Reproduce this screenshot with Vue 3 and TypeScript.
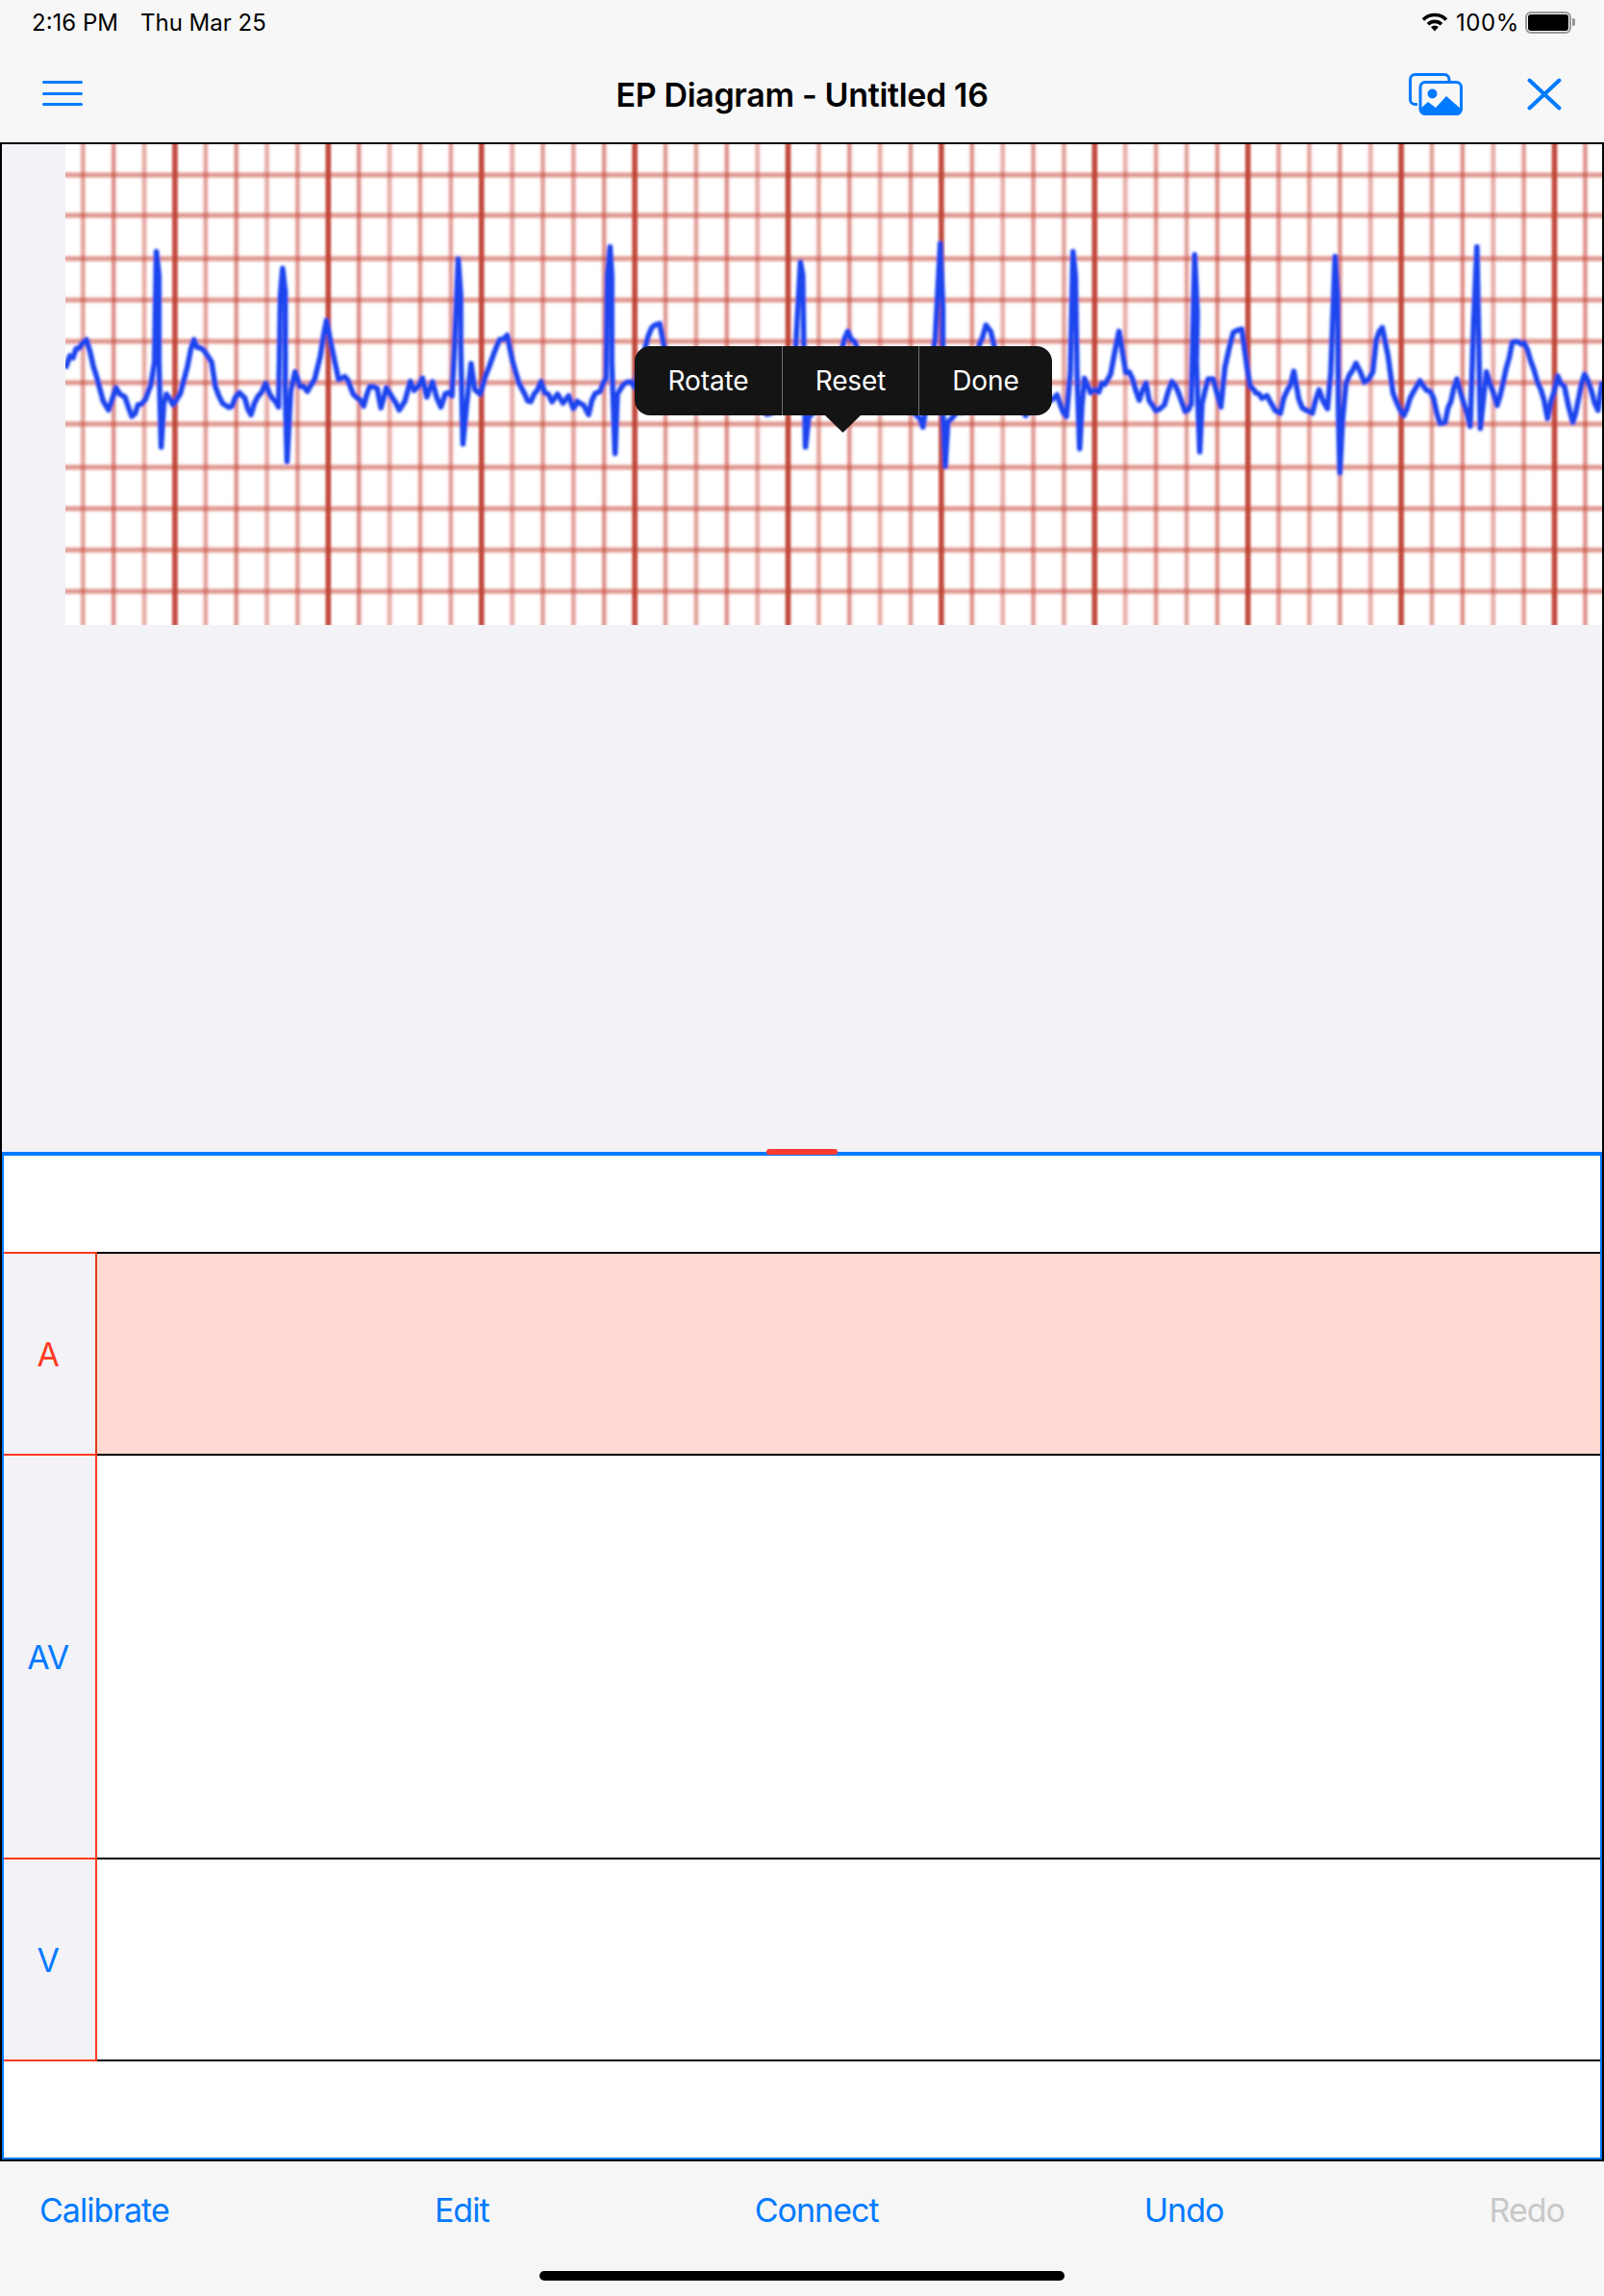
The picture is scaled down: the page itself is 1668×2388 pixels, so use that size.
<script setup lang="ts">
type Crop = { x0: number; sx: number; pts: number[] };

// vertical chart lines: every fifth one is the heavy one
const pitch = 159.4 / 5;
const vLines = Array.from({ length: 51 }, (_, i) => ({
  x: 86.3 + i * pitch,
  heavy: (i - 3) % 5 === 0,
  op: [0.42, 0.52, 0.36, 0.46][i % 4],
}));
const hLines = [182, 224, 269, 312, 355, 398, 441, 486, 529, 572, 615];

// trace points read from zoomed crops, x scaled by sx, y scaled by 3 from y=220
const crops: Crop[] = [
  {
    x0: 0,
    sx: 2.613,
    pts: [
      178, 490, 190, 460, 215, 425, 235, 400, 245, 440, 262, 520, 280, 590, 295, 610, 315, 550, 325, 575, 340, 570, 358, 640, 375, 605,
      395, 590, 410, 540, 420, 470, 425, 125, 432, 200, 432, 470, 438, 735, 445, 600, 452, 565, 470, 600, 490, 575, 510, 480, 527, 400,
      535, 430, 555, 425, 575, 470, 585, 550, 605, 605, 630, 600, 650, 560, 665, 580, 682, 635, 700, 575, 722, 540, 740, 590, 757, 610,
      762, 260, 768, 178, 775, 250, 775, 550, 780, 780, 790, 560, 802, 500, 815, 550, 835, 555, 855, 525, 870, 445, 887, 340, 900, 420,
      920, 530, 945, 520, 960, 580, 988, 605, 1005, 548, 1025, 552, 1035, 615, 1050, 550, 1065, 585, 1085, 625, 1100, 590, 1115, 530,
      1125, 565, 1148, 520, 1160, 585, 1175, 540, 1198, 610, 1210, 570, 1228, 575, 1235, 430, 1245, 148, 1252, 260, 1252, 420, 1258, 725,
      1268, 600, 1280, 475, 1290, 560, 1305, 570, 1318, 525, 1340, 450, 1358, 400, 1378, 380, 1392, 470, 1410, 530, 1442, 600, 1470, 535,
      1500, 600, 1515, 570, 1530, 590, 1545, 575, 1558, 615, 1568, 597,
    ],
  },
  {
    x0: 600,
    sx: 2.904,
    pts: [
      0, 595, 20, 600, 35, 625, 55, 565, 70, 570, 88, 520, 92, 200, 100, 110, 105, 200, 105, 470, 115, 755, 122, 570, 150, 525, 175, 540,
      205, 420, 235, 350, 250, 350, 262, 420, 300, 560, 400, 600, 500, 580, 590, 635, 640, 560, 660, 430, 675, 158, 682, 200, 685, 430,
      690, 735, 700, 650, 740, 560, 800, 420, 818, 370, 838, 415, 900, 560, 1000, 590, 1045, 665, 1082, 400, 1097, 100, 1105, 300, 1105, 620,
      1112, 795, 1120, 650, 1180, 600, 1215, 420, 1235, 355, 1250, 375, 1262, 430, 1300, 560, 1355, 635, 1435, 590, 1450, 575, 1478, 640,
      1490, 500, 1498, 125, 1505, 200, 1510, 500, 1518, 740,
    ],
  },
  {
    x0: 1120,
    sx: 2.861,
    pts: [
      8, 735, 15, 600, 22, 520, 40, 560, 65, 560, 100, 500, 125, 380, 145, 500, 165, 520, 185, 580, 205, 535, 215, 600, 235, 620, 260, 605,
      282, 530, 300, 560, 322, 625, 340, 600, 350, 135, 358, 320, 355, 470, 365, 750, 372, 600, 390, 525, 405, 530, 428, 610, 440, 490,
      465, 370, 490, 370, 505, 480, 515, 550, 550, 575, 565, 570, 590, 625, 605, 620, 645, 505, 660, 590, 680, 620, 700, 625, 720, 560,
      745, 615, 755, 500, 768, 140, 775, 260, 778, 640, 782, 815, 790, 650, 800, 530, 830, 475, 855, 530, 880, 500, 890, 410, 908, 355,
      925, 440, 940, 560, 972, 640, 1000, 560, 1020, 525, 1060, 575, 1080, 665, 1095, 650, 1130, 515, 1170, 670, 1180, 350, 1190, 110,
      1195, 390, 1200, 670, 1218, 500, 1250, 610, 1295, 410, 1330, 405, 1350, 470, 1380, 555, 1400, 640, 1430, 520, 1450, 540, 1475, 660,
      1510, 500, 1550, 620, 1562, 530,
    ],
  },
];

const points = crops.flatMap((c) => {
  const out: [number, number][] = [];
  for (let i = 0; i < c.pts.length; i += 2) {
    out.push([c.x0 + c.pts[i] / c.sx, 220 + c.pts[i + 1] / 3]);
  }
  return out;
});

// the scan is noisy, so shake the gentle stretches a little
const noise = (i: number) => {
  const v = Math.sin(i * 12.9898) * 43758.5453;
  return (v - Math.floor(v) - 0.5) * 6.5;
};

let n = 0;
const trace = points
  .flatMap(([x, y], i) => {
    const next = points[i + 1];
    if (!next || next[0] - x < 5) return [`${x.toFixed(1)},${y.toFixed(1)}`];
    const steps = Math.floor((next[0] - x) / 3);
    const out: string[] = [];
    for (let s = 0; s < steps; s++) {
      const t = s / steps;
      out.push(`${(x + (next[0] - x) * t).toFixed(1)},${(y + (next[1] - y) * t + noise(n++)).toFixed(1)}`);
    }
    return out;
  })
  .join(" ");

const rows = [
  { label: "A", selected: true, size: "short" },
  { label: "AV", selected: false, size: "tall" },
  { label: "V", selected: false, size: "short" },
];

const tools = [
  { label: "Calibrate", off: false },
  { label: "Edit", off: false },
  { label: "Connect", off: false },
  { label: "Undo", off: false },
  { label: "Redo", off: true },
];
</script>

<template>
  <div class="page">
    <header class="top">
      <div class="status">
        <div class="status-left">
          <span>2:16 PM</span>
          <span>Thu Mar 25</span>
        </div>
        <div class="status-right">
          <svg class="wifi" viewBox="0 0 28 20" width="28" height="20">
            <path d="M2 7.5A17 17 0 0 1 26 7.5" fill="none" stroke="#000" stroke-width="3.6" />
            <path d="M7 12.2A10 10 0 0 1 21 12.2" fill="none" stroke="#000" stroke-width="3.6" />
            <path d="M14 19.5L10 15A6 6 0 0 1 18 15Z" fill="#000" />
          </svg>
          <span class="pct">100%</span>
          <div class="battery">
            <div class="battery-fill"></div>
          </div>
          <div class="battery-tip"></div>
        </div>
      </div>
      <nav class="nav">
        <div class="nav-left">
          <div class="burger"><i></i><i></i><i></i></div>
        </div>
        <div class="title">EP Diagram - Untitled 16</div>
        <div class="nav-right">
          <svg viewBox="0 0 56 44" width="56" height="44">
            <path d="M9 32.5H6.5a5 5 0 0 1-5-5V6.5a5 5 0 0 1 5-5H37a5 5 0 0 1 5 5V9" fill="none" stroke="#007aff" stroke-width="3" />
            <rect x="12" y="9.5" width="42.5" height="33" rx="5" fill="none" stroke="#007aff" stroke-width="3" />
            <circle cx="24.5" cy="21.5" r="5" fill="#007aff" />
            <path d="M12 37L20 30L28 36L39 24L55 38V39a5 5 0 0 1-5 5H17a5 5 0 0 1-5-5Z" fill="#007aff" />
          </svg>
          <svg viewBox="0 0 36 34" width="36" height="34">
            <path d="M2.5 2.5L33.5 31.5M33.5 2.5L2.5 31.5" fill="none" stroke="#007aff" stroke-width="4" stroke-linecap="round" />
          </svg>
        </div>
      </nav>
    </header>

    <section class="strip-panel">
      <svg class="strip" viewBox="68 150 1598 500" width="1598" height="500">
        <defs>
          <filter id="soft" x="-2%" y="-2%" width="104%" height="104%">
            <feGaussianBlur stdDeviation="0.9" />
          </filter>
        </defs>
        <rect x="68" y="150" width="1598" height="500" fill="#fff" />
        <g filter="url(#soft)">
          <line v-for="y in hLines" :key="'h' + y" x1="60" x2="1680" :y1="y" :y2="y" stroke="#c8483c" stroke-width="8" opacity="0.12" />
          <line v-for="l in vLines" :key="'v' + l.x" :x1="l.x" :x2="l.x" y1="140" y2="660" stroke="#c8483c" stroke-width="7" opacity="0.12" />
          <line v-for="y in hLines" :key="y" x1="60" x2="1680" :y1="y" :y2="y" stroke="#c4473a" stroke-width="4.5" opacity="0.48" />
          <line
            v-for="l in vLines"
            :key="l.x"
            :x1="l.x"
            :x2="l.x"
            y1="140"
            y2="660"
            :stroke="l.heavy ? '#c04436' : '#c8483c'"
            :stroke-width="l.heavy ? 5.5 : 4"
            :opacity="l.heavy ? 0.95 : l.op"
          />
          <polyline :points="trace" fill="none" stroke="#1f45ee" stroke-width="7.5" stroke-linejoin="round" opacity="0.25" />
          <polyline :points="trace" fill="none" stroke="#1f45ee" stroke-width="5" stroke-linejoin="round" />
        </g>
      </svg>

      <div class="popup">
        <button class="pop-btn pop-rotate">Rotate</button>
        <button class="pop-btn pop-reset">Reset</button>
        <button class="pop-btn pop-done">Done</button>
        <div class="pop-arrow"></div>
      </div>
    </section>

    <section class="ladder-frame">
      <div class="ladder">
        <div class="handle"></div>
        <div class="gutter"></div>
        <div v-for="row in rows" :key="row.label" class="row" :class="'row--' + row.size">
          <div class="row-label" :class="{ 'row-label--on': row.selected }">{{ row.label }}</div>
          <div class="row-lane" :class="{ 'row-lane--on': row.selected }"></div>
        </div>
        <div class="gutter"></div>
      </div>
    </section>

    <footer class="toolbar">
      <div class="tools">
        <span v-for="t in tools" :key="t.label" class="tool" :class="{ 'tool--off': t.off }">{{ t.label }}</span>
      </div>
      <div class="home"></div>
    </footer>
  </div>
</template>

<style scoped>
.page {
  width: 1668px;
  height: 2388px;
  display: flex;
  flex-direction: column;
  overflow: hidden;
  font-family: Inter, "Liberation Sans", sans-serif;
  color: #000;
}

.top {
  height: 148px;
  background: #f7f7f7;
  flex: none;
}

.status {
  height: 48px;
  display: flex;
  justify-content: space-between;
  align-items: center;
  box-sizing: border-box;
  padding: 0 30px 2px 33px;
  font-size: 24px;
}

.status-left {
  display: flex;
  gap: 23px;
}

.status-right {
  display: flex;
  align-items: center;
}

.wifi {
  margin-right: 8px;
}

.pct {
  margin-right: 6px;
  letter-spacing: 0.6px;
}

.battery {
  width: 48px;
  height: 23px;
  box-sizing: border-box;
  border: 2px solid #999;
  border-radius: 6px;
  padding: 1px;
}

.battery-fill {
  height: 100%;
  background: #000;
  border-radius: 3px;
}

.battery-tip {
  width: 3px;
  height: 8px;
  margin-left: 1px;
  background: #999;
  border-radius: 0 2px 2px 0;
}

.nav {
  height: 100px;
  display: grid;
  grid-template-columns: 1fr auto 1fr;
  align-items: center;
  padding: 0 44px;
}

.burger {
  width: 42px;
  display: flex;
  flex-direction: column;
  gap: 8.5px;
  margin-top: -2px;
}

.burger i {
  display: block;
  height: 3px;
  background: #007aff;
  border-radius: 2px;
}

.title {
  font-size: 34px;
  font-weight: 600;
  letter-spacing: -0.34px;
}

.nav-right {
  display: flex;
  justify-content: flex-end;
  align-items: center;
  gap: 67px;
}

.strip-panel {
  position: relative;
  flex: none;
  height: 1050px;
  box-sizing: border-box;
  border-top: 2px solid #000;
  padding-left: 66px;
  border-left: 2px solid #000;
  border-right: 2px solid #000;
  background: #f2f2f7;
}

.strip {
  display: block;
}

.popup {
  position: absolute;
  left: 658px;
  top: 210px;
  height: 72px;
  display: flex;
  background: #141414;
  border-radius: 16px;
}

.pop-btn {
  appearance: none;
  border: 0;
  background: none;
  padding: 0;
  color: #fff;
  font: 400 28px Inter, "Liberation Sans", sans-serif;
  letter-spacing: -0.1px;
}

.pop-rotate {
  width: 153px;
}

.pop-reset {
  width: 142px;
  border-left: 1px solid rgba(255, 255, 255, 0.4);
}

.pop-done {
  width: 139px;
  border-left: 1px solid rgba(255, 255, 255, 0.4);
}

.pop-arrow {
  position: absolute;
  left: 198px;
  top: 72px;
  width: 37px;
  height: 18px;
  background: #141414;
  clip-path: polygon(0 0, 100% 0, 50% 100%);
}

.ladder-frame {
  flex: none;
  height: 1050px;
  box-sizing: border-box;
  border-left: 2px solid #000;
  border-right: 2px solid #000;
  border-bottom: 2px solid #000;
}

.ladder {
  position: relative;
  height: 100%;
  box-sizing: border-box;
  display: flex;
  flex-direction: column;
  background: #fff;
  border: 2px solid #007aff;
  border-top-width: 4px;
}

.handle {
  position: absolute;
  top: -7px;
  left: 50%;
  width: 74px;
  height: 6px;
  transform: translateX(-50%);
  background: #ff3b30;
  border-radius: 3px;
}

.gutter {
  height: 100px;
  flex: none;
}

.row {
  display: flex;
  flex: none;
}

.row--short {
  height: 210px;
}

.row--tall {
  height: 420px;
}

.row:nth-last-child(2) {
  height: 212px;
}

.row-label {
  width: 95px;
  flex: none;
  display: flex;
  align-items: center;
  justify-content: center;
  background: #f2f2f7;
  color: #007aff;
  font-size: 34px;
  letter-spacing: -0.5px;
  text-indent: -3px;
  border-top: 2px solid #ff3b1f;
  border-right: 2px solid #ff3b1f;
}

.row-label--on {
  color: #ff3b1f;
  border-right-color: #d83c17;
}

.row-lane {
  flex: 1;
  border-top: 2px solid #000;
}

.row-lane--on {
  background: #ffd9d2;
}

.row:nth-last-child(2) .row-label {
  border-bottom: 2px solid #ff3b1f;
}

.row:nth-last-child(2) .row-lane {
  border-bottom: 2px solid #000;
}

.toolbar {
  flex: 1;
  background: #f6f6f6;
  position: relative;
}

.tools {
  display: flex;
  justify-content: space-between;
  padding: 30px 41px 0;
  font-size: 34px;
  line-height: 42px;
  letter-spacing: -1px;
  color: #007aff;
}

.tool--off {
  color: #c8c8c8;
}

.home {
  position: absolute;
  left: 561px;
  top: 114px;
  width: 546px;
  height: 10px;
  background: #000;
  border-radius: 5px;
}
</style>
